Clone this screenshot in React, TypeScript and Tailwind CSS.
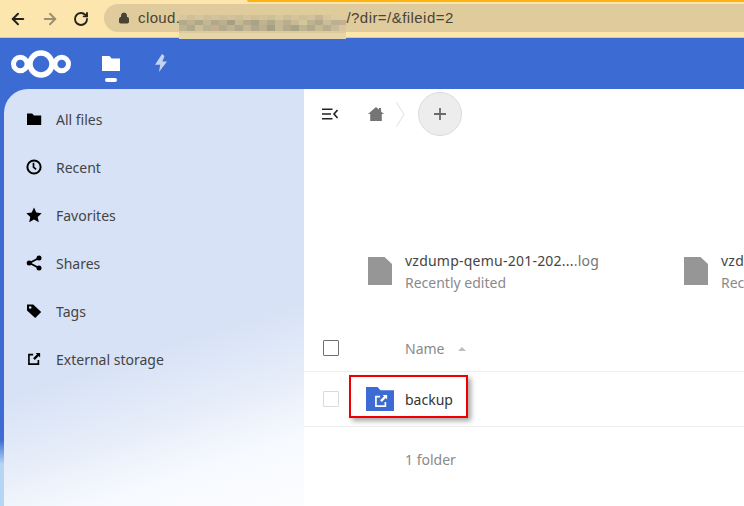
import { ArrowLeft, ArrowRight, RotateCw, Lock } from 'lucide-react';

const font = { fontFamily: '"Noto Sans", "Open Sans", sans-serif' };

// pixelated part of the address, one colour per block
const blurTop = ['#d8c79c', '#cfc097', '#d5c59b', '#cdbf97', '#d4c29a', '#cec096', '#d2c199', '#ccbe95', '#d3c49b', '#cfc096', '#d2c39a', '#cdbf96', '#d6c69c', '#cebf99', '#d4c49a', '#cfbf97', '#d3c29b', '#c6b792', '#d6c59d', '#dccb9f', '#dccb9f'];
const blurMid = ['#bdb391', '#b0a98a', '#cbbd96', '#bbb08f', '#c6ae90', '#b3aa8c', '#c0b291', '#aea789', '#c5b693', '#b0a889', '#bcaf8f', '#a5a085', '#c5b893', '#b4a98b', '#a8a386', '#c0b490', '#b1a98a', '#c5b893', '#b8ae8d', '#c8ba96', '#d6c69c'];

function FolderGlyph() {
  return (
    <svg viewBox="0 0 16 16" className="w-4 h-4">
      <path d="M1 2.5h5.2L8 4.5h7.2v9.5H1z" fill="#000" />
    </svg>
  );
}

function ClockGlyph() {
  return (
    <svg viewBox="0 0 16 16" className="w-4 h-4" fill="none" stroke="#000">
      <circle cx="8" cy="8" r="6.6" strokeWidth="2" />
      <path d="M7.5 3.8v4.4l2.6 2.2" strokeWidth="1.7" />
    </svg>
  );
}

function StarGlyph() {
  return (
    <svg viewBox="0 0 16 16" className="w-4 h-4">
      <path d="M8 .6l2.3 5 5.4.6-4 3.7 1.1 5.4L8 12.6l-4.8 2.7 1.1-5.4-4-3.7 5.4-.6z" fill="#000" />
    </svg>
  );
}

function ShareGlyph() {
  return (
    <svg viewBox="0 0 16 16" className="w-4 h-4">
      <path d="M13 3L3.5 8l9.5 5" fill="none" stroke="#000" strokeWidth="1.8" />
      <circle cx="13" cy="2.9" r="2.5" fill="#000" />
      <circle cx="3.2" cy="8" r="2.5" fill="#000" />
      <circle cx="13" cy="13.1" r="2.5" fill="#000" />
    </svg>
  );
}

function TagGlyph() {
  return (
    <svg viewBox="0 0 16 16" className="w-4 h-4">
      <path fillRule="evenodd" d="M1 1.5h6.2L15.2 9l-6 6L1 7.6zM4.2 3.2a1.3 1.3 0 100 2.6 1.3 1.3 0 000-2.6z" fill="#000" />
    </svg>
  );
}

function ExternalGlyph({ color = '#000' }: { color?: string }) {
  return (
    <svg viewBox="0 0 16 16" className="w-full h-full">
      <path d="M7 3H2.2v10.8H13V9" fill="none" stroke={color} strokeWidth="1.9" />
      <path d="M9.8 1H15v5.2l-1.7-1.7-4.4 4.6-1.9-1.9 4.5-4.5z" fill={color} />
    </svg>
  );
}

function NavItem({ icon, label }: { icon: React.ReactNode; label: string }) {
  return (
    <div className="h-12 flex items-center pl-[22px] text-[14px] text-[#444]">
      <span className="w-4 h-4 flex-none">{icon}</span>
      <span className="ml-[14px]">{label}</span>
    </div>
  );
}

function RecentFile({ name, className }: { name: string; className: string }) {
  return (
    <div className={`flex flex-none items-center ${className}`}>
      <svg viewBox="0 0 24 28" className="w-6 h-7 flex-none">
        <path d="M0 0h16.5L24 7v21H0z" fill="#969696" />
      </svg>
      <div className="ml-[13px] mt-[2px] text-[14px] leading-[22px]">
        <div className="text-[#444] whitespace-nowrap tracking-[0.23px]">
          {name}
          <span className="text-[#767676]">.log</span>
        </div>
        <div className="text-[#8a8a8a] whitespace-nowrap">Recently edited</div>
      </div>
    </div>
  );
}

export default function App() {
  return (
    <div className="w-[744px] h-[506px] overflow-hidden relative flex flex-col bg-[#3b6bd3]" style={font}>
      {/* browser chrome */}
      <div className="h-[38px] flex-none bg-[#fde6ae] border-b border-[#dcc898] flex items-center relative">
        <div className="absolute top-0 left-[247px] right-0 h-[2px] bg-[#fdb310] rounded-bl" />
        <ArrowLeft className="ml-[9px] w-[18px] h-[18px] text-[#25231d]" strokeWidth={2.6} />
        <ArrowRight className="ml-[14px] w-[18px] h-[18px] text-[#9b8f70]" strokeWidth={2.6} />
        <RotateCw className="ml-[14px] w-[16px] h-[16px] text-[#25231d]" strokeWidth={2.8} />
        <div className="ml-[15px] flex-1 h-[28px] -mt-px rounded-l-full bg-[#dfcb9b] flex items-center pl-[14px] text-[15px] text-[#4a4436]" style={{ fontFamily: '"Liberation Sans", Arial, sans-serif' }}>
          <Lock className="w-[12px] h-[12px] text-[#4a4436]" fill="#4a4436" strokeWidth={2} />
          <span className="ml-[8px] tracking-[0.4px]">cloud.</span>
          <span className="w-[166px] flex-none" />
          <span className="tracking-[0.45px]">/?dir=/&amp;fileid=2</span>
        </div>
        <div className="absolute left-[179px] top-[15px] w-[167px] h-[24px] bg-[#e6d5a8] overflow-hidden">
          <div className="flex h-[5px]">
            {blurTop.map((c, i) => (
              <div key={i} className="w-2 flex-none" style={{ background: c }} />
            ))}
          </div>
          <div className="flex h-[5px]">
            {blurTop.map((c, i) => (
              <div key={i} className="w-2 flex-none" style={{ background: blurMid[(i + 5) % 21] }} />
            ))}
          </div>
          <div className="flex h-[6px]">
            {blurMid.map((c, i) => (
              <div key={i} className="w-2 flex-none" style={{ background: c }} />
            ))}
          </div>
          <div className="h-[2px] bg-[#dccb9f]" />
        </div>
      </div>

      {/* nextcloud header */}
      <div className="h-[51px] flex-none relative flex items-start">
        <svg viewBox="0 0 60 28" className="ml-[11px] mt-[12px] w-[60px] h-[28px] flex-none" fill="none" stroke="#fff">
          <circle cx="9.3" cy="14" r="6.8" strokeWidth="5" />
          <circle cx="30" cy="14" r="11" strokeWidth="5.4" />
          <circle cx="50.7" cy="14" r="6.8" strokeWidth="5" />
        </svg>
        <div className="ml-[31px] mt-[18px] w-[18px] flex flex-col items-center flex-none">
          <svg viewBox="0 0 18 15" className="w-[18px] h-[15px]">
            <path d="M0 0h7.5l2.2 2.6H18V15H0z" fill="#fff" />
          </svg>
          <div className="mt-[7px] w-3 h-[4px] rounded-full bg-white" />
        </div>
        <svg viewBox="0 0 12 18" className="ml-[35px] mt-[16px] w-3 h-[18px] flex-none opacity-70">
          <path d="M7 0L1.5 8.5l-1.5 2.3h5.2L4 18l8-10.5H7.4L9.5 2z" fill="#fff" />
        </svg>
      </div>

      <div className="flex-1 flex min-h-0 relative">
        <div className="w-[4px] flex-none bg-gradient-to-b from-[#3b6bd3] from-[84%] to-[#b5d5f3] to-[90%]" />

        {/* sidebar */}
        <div className="w-[300px] flex-none rounded-tl-[24px] pt-[6px] bg-[linear-gradient(162deg,#d7e2f6_0%,#d7e2f6_60%,#e6edf9_74%,#f6f9fe_86%,#fcfdff_100%)]">
          <NavItem icon={<FolderGlyph />} label="All files" />
          <NavItem icon={<ClockGlyph />} label="Recent" />
          <NavItem icon={<StarGlyph />} label="Favorites" />
          <NavItem icon={<ShareGlyph />} label="Shares" />
          <NavItem icon={<TagGlyph />} label="Tags" />
          <NavItem icon={<span className="block w-[14px] h-[14px] ml-px mt-px"><ExternalGlyph /></span>} label="External storage" />
        </div>

        {/* main content */}
        <div className="flex-1 min-w-0 bg-white flex flex-col overflow-hidden">
          <div className="h-[50px] flex-none flex items-center pl-[18px]">
            <svg viewBox="0 0 16 12" className="w-4 h-3 flex-none -mt-[1px]" fill="none" stroke="#222" strokeWidth="1.6">
              <path d="M0 1.2h10.5M0 6h9M0 10.8h10.5M15.5 2L12 6l3.5 4" />
            </svg>
            <svg viewBox="0 0 16 14" className="ml-[30px] w-4 h-[14px] flex-none">
              <path d="M8 0l3 2.6V1h2v3.4L16 7h-2.2v7H2.2V7H0z" fill="#757575" />
            </svg>
            <svg viewBox="0 0 9 25" className="ml-[12px] w-[9px] h-[25px] flex-none" fill="none" stroke="#dedede">
              <path d="M.5.5l7.5 12-7.500 12" />
            </svg>
            <div className="ml-[13px] w-[44px] h-[44px] flex-none rounded-full bg-[#ededed] border border-[#dbdbdb] flex items-center justify-center">
              <svg viewBox="0 0 12 12" className="w-3 h-3" fill="none" stroke="#696969" strokeWidth="1.8">
                <path d="M6 0v12M0 6h12" />
              </svg>
            </div>
          </div>

          <div className="mt-[107px] h-[50px] flex-none flex items-center pl-[64px]">
            <RecentFile name="vzdump-qemu-201-202..." className="w-[316px]" />
            <RecentFile name="vzdump-qemu-201-202..." className="w-[316px]" />
          </div>

          <div className="mt-[28px] h-[48px] flex-none flex items-center border-b border-[#ededed] pl-[19px]">
            <div className="w-4 h-4 flex-none border border-[#707070] rounded-[1px]" />
            <span className="ml-[66px] mt-[2px] text-[14px] text-[#8a8a8a]">Name</span>
            <svg viewBox="0 0 8 4" className="ml-[14px] mt-[2px] w-2 h-1 flex-none">
              <path d="M4 0l4 4H0z" fill="#bdbdbd" />
            </svg>
          </div>

          <div className="h-[55px] flex-none flex items-center border-b border-[#ededed] pl-[19px]">
            <div className="w-4 h-4 flex-none border border-[#dbdbdb] rounded-[1px]" />
            <div className="ml-[10px] mb-[5px] w-[119px] h-[43px] flex-none border-2 border-[#ee0000] shadow-[3px_3px_5px_rgba(0,0,0,0.35)] flex items-center pl-[15px] pt-[5px]">
              <div className="relative w-[28px] h-[24px] flex-none">
                <svg viewBox="0 0 28 24" className="w-[28px] h-[24px]">
                  <path d="M0 0h11.5l3 3.2H28V24H0z" fill="#3b6bd3" />
                </svg>
                <span className="absolute left-[8px] top-[7px] w-[14px] h-[14px]">
                  <ExternalGlyph color="#fff" />
                </span>
              </div>
              <span className="ml-[11px] text-[14px] text-[#333]">backup</span>
            </div>
          </div>

          <div className="h-[64px] flex-none flex items-center pl-[101px] text-[14px] text-[#8a8a8a]">1 folder</div>
        </div>
      </div>
    </div>
  );
}
